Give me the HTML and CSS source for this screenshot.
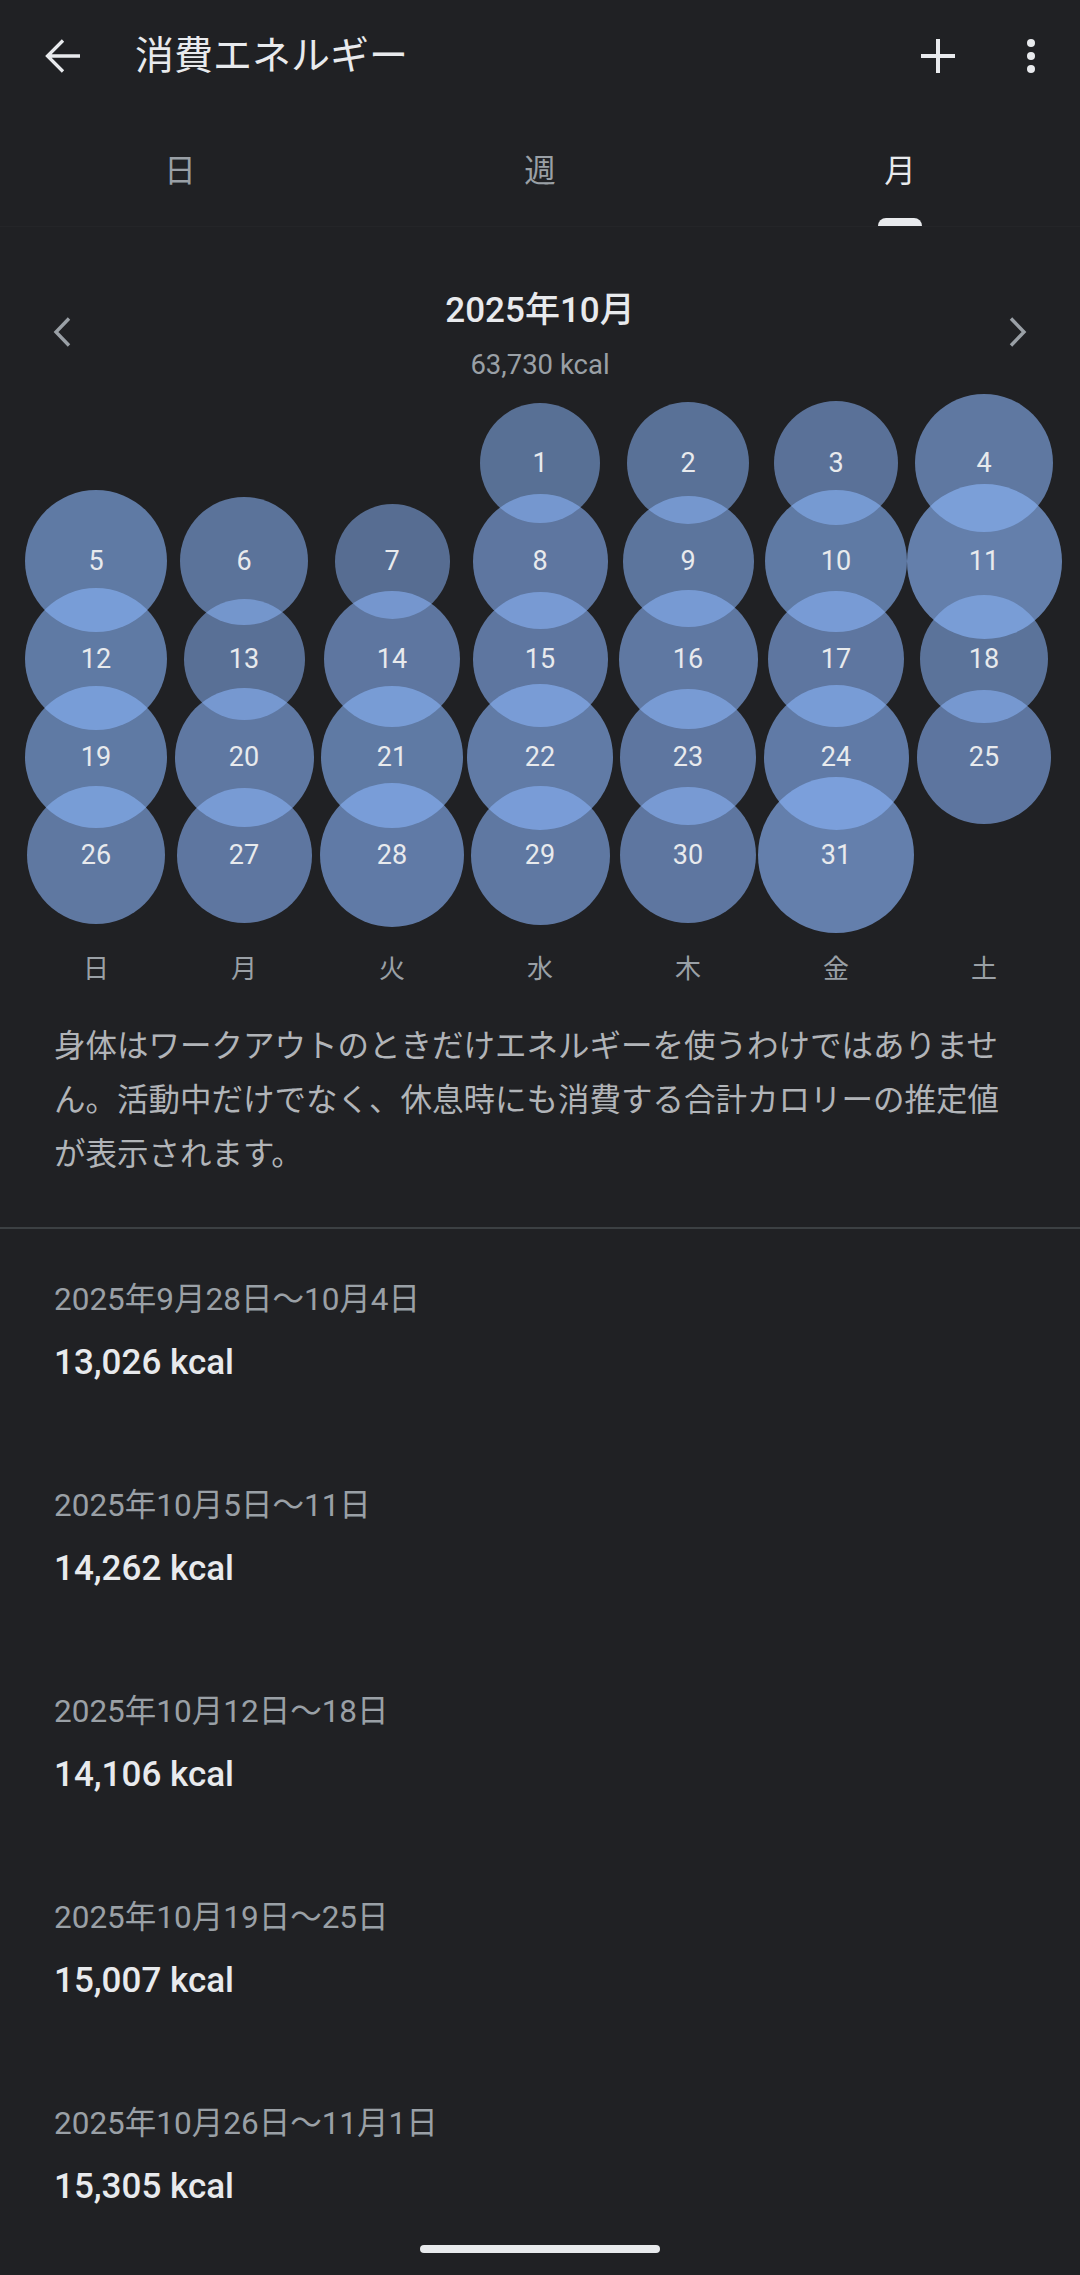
FILE: index.html
```html
<!DOCTYPE html>
<html lang="ja">
<head>
  <meta charset="UTF-8" />
  <meta name="viewport" content="width=device-width, initial-scale=1.0"/>
  <title>消費エネルギー</title>
  <link rel="stylesheet" href="styles.css">
</head>
<body>

  <header class="app-bar">
    <svg class="back-icon" width="36" height="36" viewBox="0 0 36 36">
      <path d="M35 18H3 M18 2.5 L2.5 18 L18 33.5" fill="none" stroke="#e8eaed" stroke-width="3.3"/>
    </svg>
    <h1 class="app-title">消費エネルギー</h1>
    <svg class="add-icon" width="36" height="36" viewBox="0 0 36 36">
      <path d="M18 1V35 M1 18H35" fill="none" stroke="#e8eaed" stroke-width="4"/>
    </svg>
    <svg class="more-icon" width="8" height="36" viewBox="0 0 8 36">
      <circle cx="4" cy="5" r="4" fill="#e8eaed"/>
      <circle cx="4" cy="18" r="4" fill="#e8eaed"/>
      <circle cx="4" cy="31" r="4" fill="#e8eaed"/>
    </svg>
  </header>

  <nav class="tabs">
    <div class="tab"><span class="tab-label">日</span></div>
    <div class="tab"><span class="tab-label">週</span></div>
    <div class="tab active"><span class="tab-label">月</span><span class="tab-indicator"></span></div>
  </nav>

  <!-- Month navigation -->
  <div class="month-nav">
    <svg class="chev" width="18" height="30" viewBox="0 0 18 30">
      <path d="M16 1.5 L3 15 L16 28.5" fill="none" stroke="#9aa0a6" stroke-width="3.4"/>
    </svg>
    <div class="month-center">
      <div class="month-title">2025年10月</div>
      <div class="month-total">63,730 kcal</div>
    </div>
    <svg class="chev" width="18" height="30" viewBox="0 0 18 30">
      <path d="M2 1.5 L15 15 L2 28.5" fill="none" stroke="#9aa0a6" stroke-width="3.4"/>
    </svg>
  </div>

  <!-- Bubble calendar -->
  <div class="cal" id="cal"></div>

  <div class="weekdays">
    <span>日</span><span>月</span><span>火</span><span>水</span><span>木</span><span>金</span><span>土</span>
  </div>

  <p class="note">身体はワークアウトのときだけエネルギーを使うわけではありません。活動中だけでなく、休息時にも消費する合計カロリーの推定値が表示されます。</p>

  <div class="divider"></div>

  <div class="weeks">
    <div class="week">
      <div class="week-range">2025年9月28日〜10月4日</div>
      <div class="week-total">13,026 kcal</div>
    </div>
    <div class="week">
      <div class="week-range">2025年10月5日〜11日</div>
      <div class="week-total">14,262 kcal</div>
    </div>
    <div class="week">
      <div class="week-range">2025年10月12日〜18日</div>
      <div class="week-total">14,106 kcal</div>
    </div>
    <div class="week">
      <div class="week-range">2025年10月19日〜25日</div>
      <div class="week-total">15,007 kcal</div>
    </div>
    <div class="week">
      <div class="week-range">2025年10月26日〜11月1日</div>
      <div class="week-total">15,305 kcal</div>
    </div>
  </div>

  <div class="home-bar"></div>

  <script>
    // bubble size per day (bigger = more energy)
    const sizes = [120, 122, 124, 138, 142, 128, 115, 135, 131, 142, 155,
                   142, 121, 136, 135, 139, 136, 128, 142, 139, 142, 146,
                   136, 145, 134, 138, 135, 144, 139, 136, 156];
    const firstDay = 3; // Oct 1 2025 is a Wednesday
    const cal = document.getElementById("cal");

    for (let i = 0; i < firstDay; i++) {
      cal.appendChild(document.createElement("div"));
    }

    sizes.forEach(function (d, i) {
      const cell = document.createElement("div");
      cell.className = "cell";
      const bubble = document.createElement("div");
      bubble.className = "bubble";
      const alpha = (0.52 + (d - 114) * 0.003).toFixed(3);
      bubble.style.width = d + "px";
      bubble.style.height = d + "px";
      bubble.style.background = "rgba(138, 180, 248, " + alpha + ")";
      bubble.textContent = i + 1;
      cell.appendChild(bubble);
      cal.appendChild(cell);
    });
  </script>

</body>
</html>
```

FILE: styles.css
```css
html, body {
  margin: 0;
  padding: 0;
}

body {
  font-family: Roboto, "Noto Sans CJK JP", sans-serif;
  background: #202124;
  color: #e8eaed;
  height: 2275px;
  overflow: hidden;
  position: relative;
}

.app-bar {
  display: flex;
  align-items: center;
  height: 112px;
  padding: 0 45px;
}

.back-icon {
  flex-shrink: 0;
}

.app-title {
  flex: 1;
  margin: 0 0 0 54px;
  font-size: 39px;
  font-weight: 400;
  line-height: 48px;
  color: #e8eaed;
}

.add-icon {
  flex-shrink: 0;
}

.more-icon {
  margin-left: 71px;
  flex-shrink: 0;
}

.tabs {
  display: flex;
  border-bottom: 1px solid #242528;
}

.tab {
  flex: 1;
  height: 114px;
  display: flex;
  flex-direction: column;
  align-items: center;
}

.tab-label {
  padding-top: 40px;
  font-size: 31.5px;
  line-height: 40px;
  color: #9aa0a6;
}

.tab.active .tab-label {
  color: #e8eaed;
}

.tab-indicator {
  margin-top: auto;
  width: 44px;
  height: 8px;
  border-radius: 8px 8px 0 0;
  background: #e8eaed;
}

.month-nav {
  display: flex;
  align-items: flex-start;
  margin-top: 62px;
  padding: 0 53px;
}

.chev {
  margin-top: 28px;
  flex-shrink: 0;
}

.month-center {
  flex: 1;
  text-align: center;
}

.month-title {
  font-size: 35px;
  font-weight: 500;
  line-height: 44px;
}

.month-total {
  margin-top: 14px;
  font-size: 27.5px;
  line-height: 36px;
  color: #9aa0a6;
}

.cal {
  display: grid;
  grid-template-columns: repeat(7, 148px);
  grid-auto-rows: 98px;
  margin-top: 31px;
  padding: 0 22px;
}

.cell {
  display: flex;
  align-items: center;
  justify-content: center;
}

.bubble {
  flex-shrink: 0;
  border-radius: 50%;
  display: flex;
  align-items: center;
  justify-content: center;
  font-size: 27px;
  color: #e8eaed;
}

.weekdays {
  display: grid;
  grid-template-columns: repeat(7, 148px);
  margin-top: 45px;
  padding: 0 22px;
  font-size: 26px;
  line-height: 40px;
  text-align: center;
  color: #9aa0a6;
}

.note {
  margin: 31px 54px 0;
  font-size: 31.5px;
  line-height: 54px;
  color: #b1b4b8;
}

.divider {
  margin-top: 45px;
  height: 2px;
  background: #3c4043;
}

.weeks {
  padding: 49px 54px 0;
}

.week {
  margin-bottom: 98px;
}

.week:last-child {
  margin-bottom: 0;
}

.week-range {
  font-size: 31.5px;
  line-height: 44px;
  color: #9aa0a6;
}

.week-total {
  margin-top: 18px;
  font-size: 35px;
  font-weight: 500;
  line-height: 46px;
  color: #e8eaed;
}

.home-bar {
  position: absolute;
  left: 420px;
  bottom: 22px;
  width: 240px;
  height: 8px;
  border-radius: 4px;
  background: #e8eaed;
}
```
